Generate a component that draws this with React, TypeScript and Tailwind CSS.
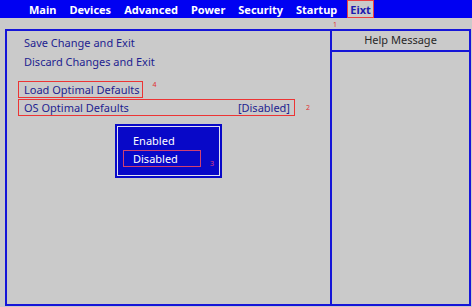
import React from "react";

const font = { fontFamily: '"Noto Sans", "Open Sans", sans-serif' };

export default function App() {
  const menu = ["Main", "Devices", "Advanced", "Power", "Security", "Startup"];
  const gaps = ["ml-0", "ml-[13px]", "ml-[13px]", "ml-[13px]", "ml-[13px]", "ml-[13px]"];
  return (
    <div className="relative w-[472px] h-[307px] bg-[#cacaca] overflow-hidden" style={font}>
      <div className="h-[18px] bg-[#0000f2] flex items-center pl-[29px] text-white font-bold text-[11px] leading-none">
        {menu.map((m, i) => (
          <span key={m} className={gaps[i]}>{m}</span>
        ))}
        <span className="ml-[10px] h-[18px] px-[2px] flex items-center bg-[#cacaca] text-[#1b1bb0] border border-[#ea4040]">Eixt</span>
      </div>
      <div className="absolute left-[333px] top-[21px] text-[7px] leading-none text-[#e03030]">1</div>
      <div className="mt-[11px] ml-[5px] w-[466px] h-[277px] border-2 border-[#1515d8] flex">
        <div className="relative flex-1 border-r-2 border-[#1515d8] pt-[2px] pl-[11px] text-[11px] leading-[19px] text-[#1e1e90]">
          <div className="pl-[6px]">Save Change and Exit</div>
          <div className="pl-[6px]">Discard Changes and Exit</div>
          <div className="mt-[10px] flex items-center">
            <div className="border border-[#ec3434] pl-[5px] pr-[2px] h-[17px] flex items-center">Load Optimal Defaults</div>
            <span className="ml-[10px] -mt-[10px] text-[7px] leading-none text-[#e03030]">4</span>
          </div>
          <div className="mt-[1px] flex items-center">
            <div className="w-[277px] border border-[#ec3434] pl-[5px] pr-[4px] h-[17px] flex items-center justify-between">
              <span>OS Optimal Defaults</span>
              <span>[Disabled]</span>
            </div>
            <span className="ml-[11px] text-[7px] leading-none text-[#e03030]">2</span>
          </div>
          <div className="absolute left-[108px] top-[93px] w-[107px] h-[54px] bg-[#0808c8] p-[2px]">
            <div className="w-full h-full border border-[#e0e0f0] pt-[5px] pl-[5px] text-white">
              <div className="pl-[10px] leading-[18px]">Enabled</div>
              <div className="flex items-end">
                <div className="w-[78px] h-[17px] border border-[#d04070] pl-[9px] flex items-center">Disabled</div>
                <span className="ml-[9px] text-[7px] leading-none text-[#e04080]">3</span>
              </div>
            </div>
          </div>
        </div>
        <div className="w-[137px] flex flex-col">
          <div className="h-[21px] border-b-2 border-[#1515d8] flex items-center justify-center text-[11px] text-[#282828]">Help Message</div>
          <div className="flex-1"></div>
        </div>
      </div>
    </div>
  );
}
